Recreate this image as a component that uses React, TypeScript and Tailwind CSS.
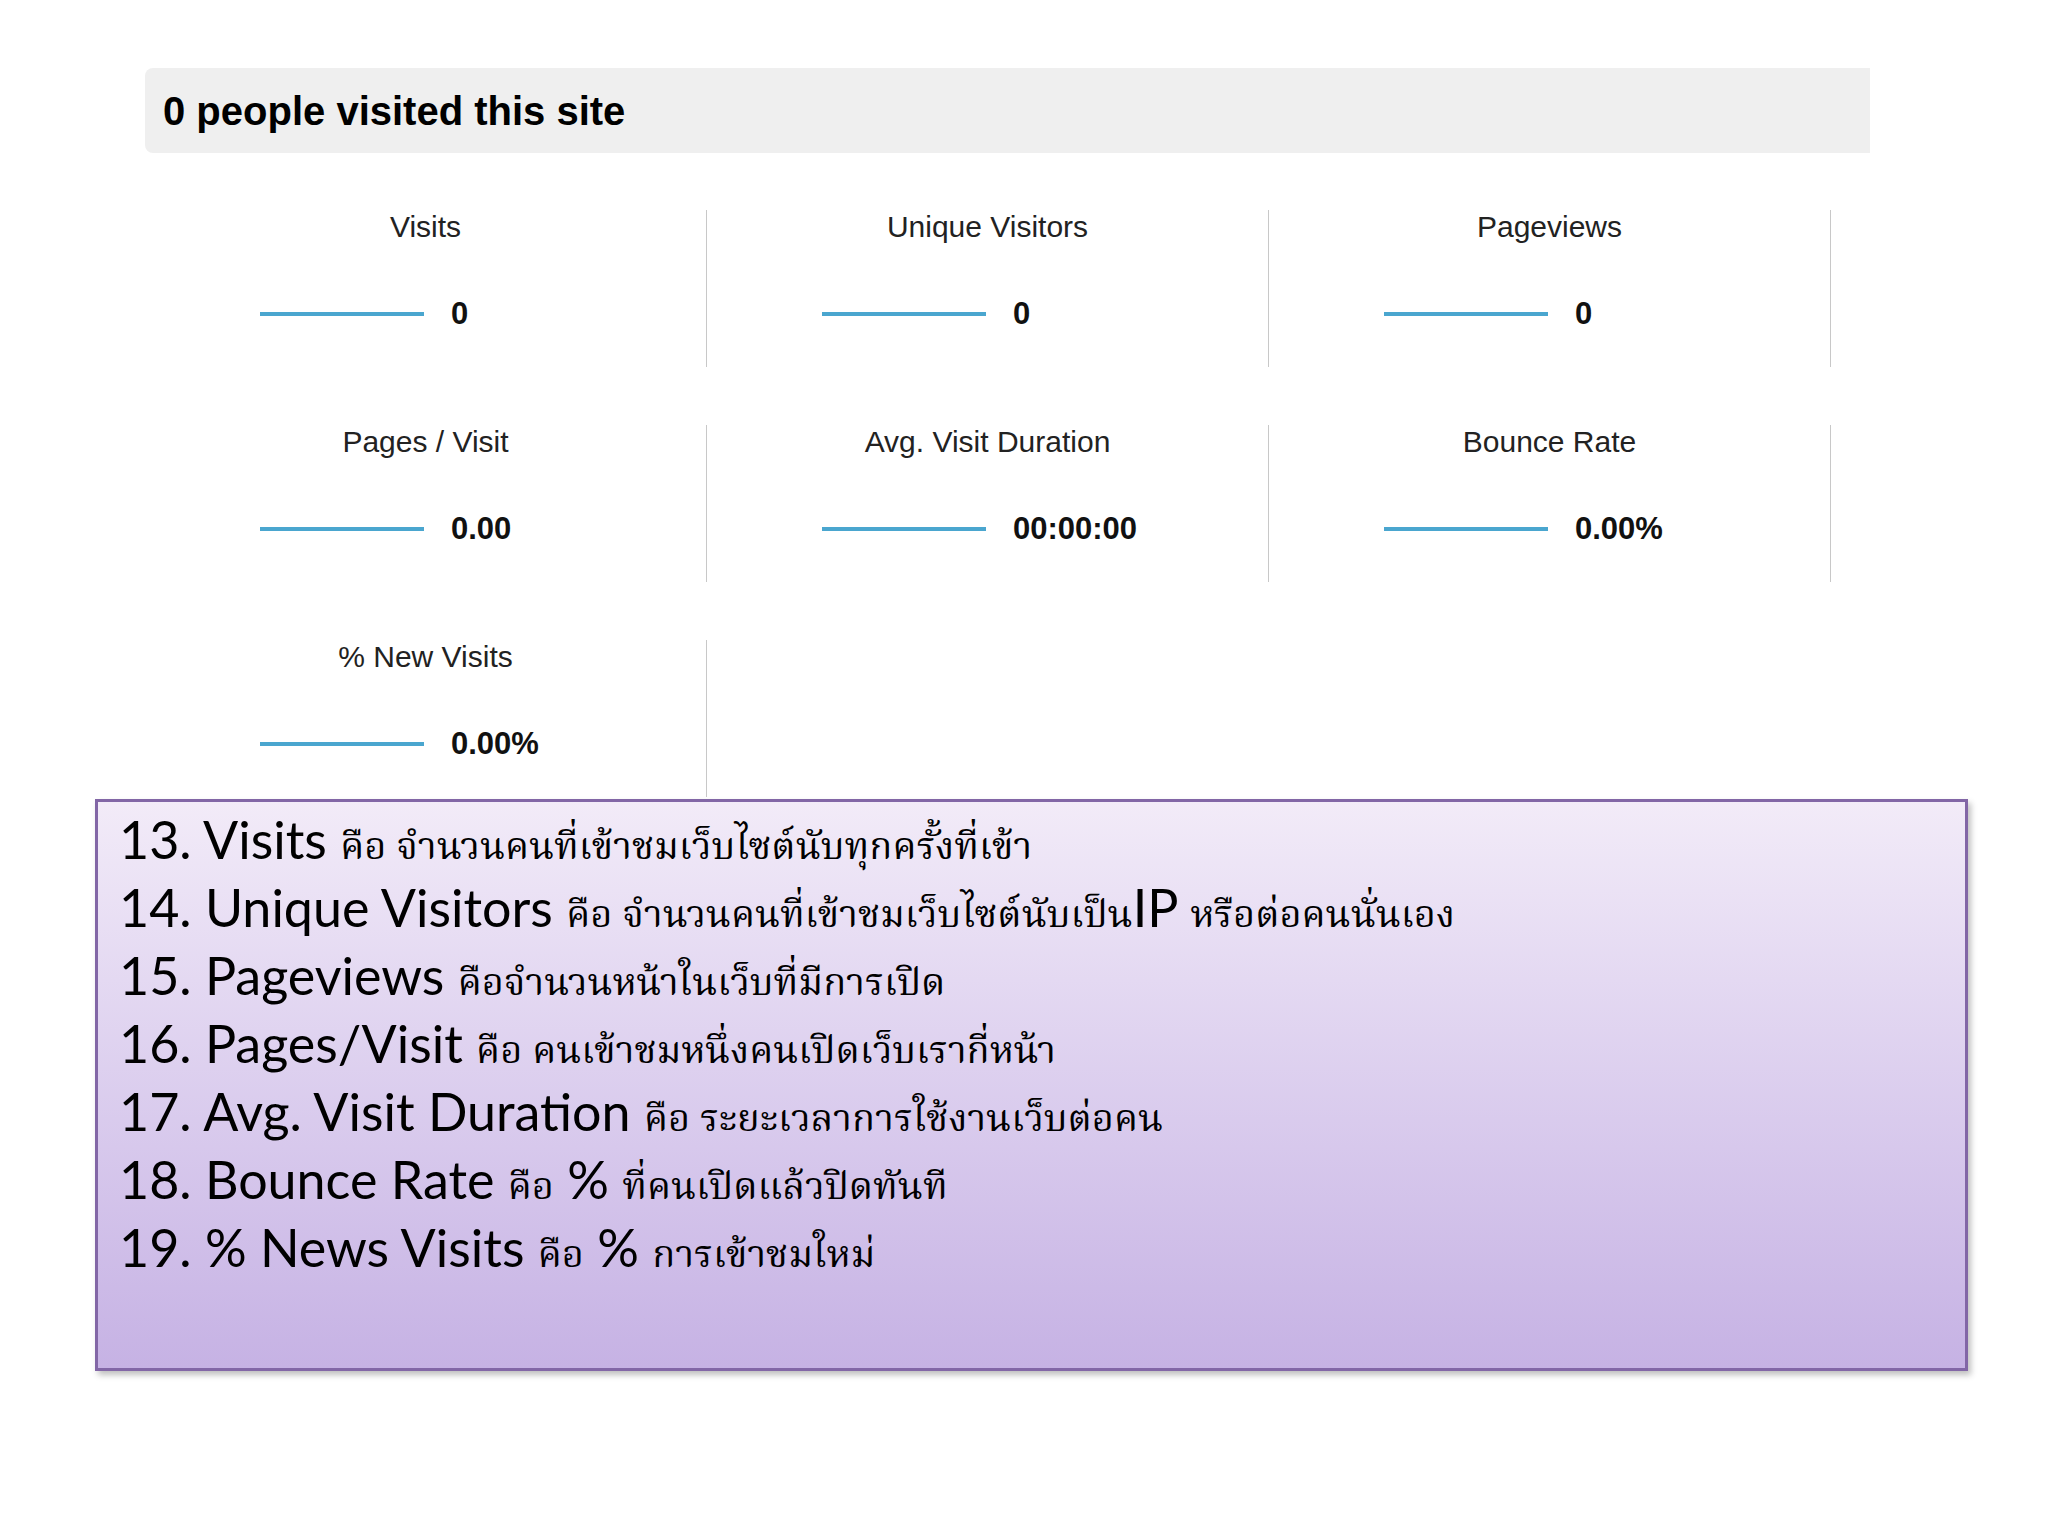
import React from "react";

type Stat = {
  label: string;
  value: string;
};

const stats: Stat[] = [
  { label: "Visits", value: "0" },
  { label: "Unique Visitors", value: "0" },
  { label: "Pageviews", value: "0" },
  { label: "Pages / Visit", value: "0.00" },
  { label: "Avg. Visit Duration", value: "00:00:00" },
  { label: "Bounce Rate", value: "0.00%" },
  { label: "% New Visits", value: "0.00%" },
];

// each note: english term, then thai text; "mid" is english text sitting between thai parts
const notes = [
  { en: "13. Visits", th: "คือ จำนวนคนที่เข้าชมเว็บไซต์นับทุกครั้งที่เข้า" },
  { en: "14. Unique Visitors", th: "คือ จำนวนคนที่เข้าชมเว็บไซต์นับเป็น", mid: "IP", rest: "หรือต่อคนนั่นเอง" },
  { en: "15. Pageviews", th: "คือจำนวนหน้าในเว็บที่มีการเปิด" },
  { en: "16. Pages/Visit", th: "คือ คนเข้าชมหนึ่งคนเปิดเว็บเรากี่หน้า" },
  { en: "17. Avg. Visit Duration", th: "คือ ระยะเวลาการใช้งานเว็บต่อคน" },
  { en: "18. Bounce Rate", th: "คือ", mid: " %", rest: "ที่คนเปิดแล้วปิดทันที" },
  { en: "19. % News Visits", th: "คือ", mid: " %", rest: "การเข้าชมใหม่" },
];

const StatCell: React.FC<{ stat: Stat }> = ({ stat }) => (
  <div className="h-[157px] border-r border-[#c8c8c8] flex flex-col">
    <div className="text-center text-[30px] leading-[34px] text-[#222]">{stat.label}</div>
    <div className="flex items-center pl-[115px] mt-[52px]">
      <div className="w-[164px] h-[4px] bg-[#4aa6cf]" />
      <div className="ml-[27px] text-[31px] font-bold leading-[36px] text-[#111]">{stat.value}</div>
    </div>
  </div>
);

const thai =
  "text-[38px] leading-none font-['Laksaman','Kinnari','Norasi','Noto_Serif_Thai','Noto_Sans_Thai_Looped','Garuda','Loma','Noto_Sans_Thai',sans-serif]";

export default function App() {
  return (
    <div className="w-[2048px] h-[1536px] bg-white font-['Liberation_Sans',Arial,sans-serif] text-black">
      <div className="pt-[68px] pl-[145px]">
        <div className="w-[1725px] h-[85px] bg-[#efefef] rounded-l-[8px] flex items-center pl-[18px]">
          <span className="text-[40px] font-bold leading-none">0 people visited this site</span>
        </div>

        <div className="mt-[57px] w-[1686px] grid grid-cols-3 gap-y-[58px]">
          {stats.map((s) => (
            <StatCell key={s.label} stat={s} />
          ))}
        </div>
      </div>

      <div className="ml-[95px] mt-[2px] w-[1873px] h-[572px] border-[3px] border-[#8266a6] bg-gradient-to-b from-[#f2ebf8] to-[#c6b2e4] shadow-[3px_4px_6px_rgba(0,0,0,0.25)] pl-[21px] pt-[3px] font-['Lato',sans-serif]">
        {notes.map((n) => (
          <div key={n.en} className="h-[68px] text-[52px] leading-[68px] whitespace-nowrap">
            {n.en} <span className={thai}>{n.th}</span>
            {n.mid}
            {n.rest && (
              <>
                {" "}
                <span className={thai}>{n.rest}</span>
              </>
            )}
          </div>
        ))}
      </div>
    </div>
  );
}
